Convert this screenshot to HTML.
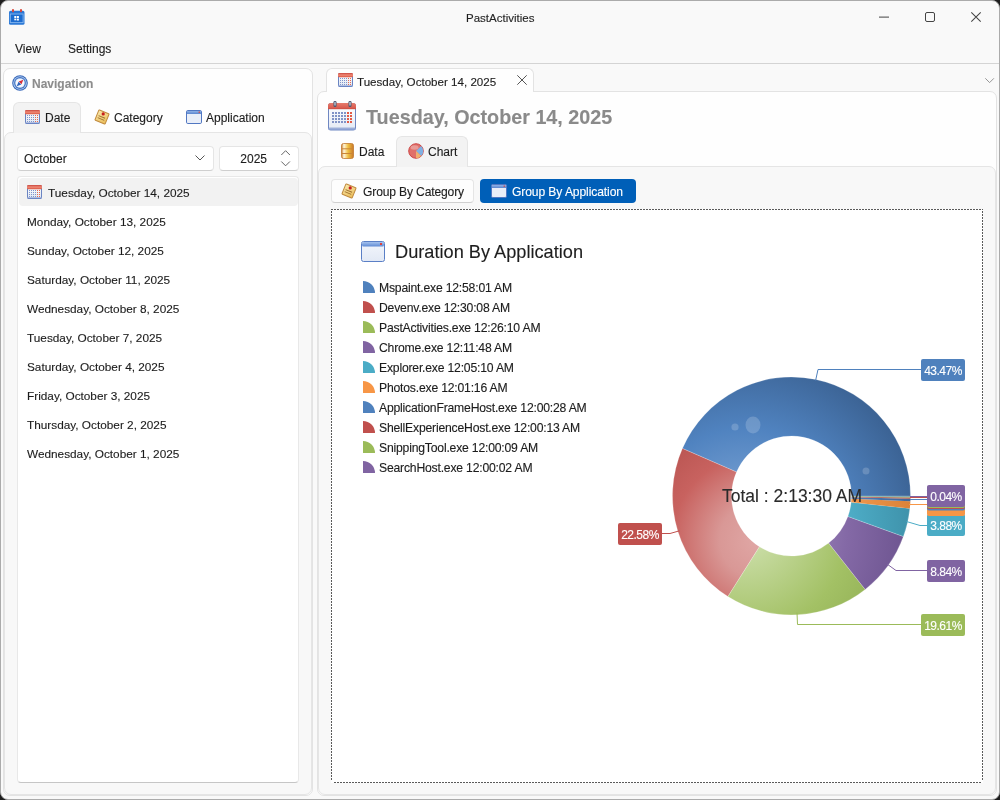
<!DOCTYPE html>
<html><head><meta charset="utf-8">
<style>
*{margin:0;padding:0;box-sizing:border-box}
html,body{width:1000px;height:800px;overflow:hidden;background:#1e1e1e}
body{font-family:"Liberation Sans",sans-serif;color:#1c1c1c;position:relative}
.t{will-change:transform;-webkit-text-stroke:0.12px currentColor}
.a{position:absolute}
.t{position:absolute;white-space:nowrap;line-height:1;font-size:12px}
svg{position:absolute;overflow:visible}
#win{left:0;top:0;width:1000px;height:800px;border-radius:8px;background:#f9f9f9;border:1px solid #ababab;overflow:hidden}
.li{left:27px;font-size:11.8px!important}
</style></head>
<body>
<div id="win" class="a"></div>

<!-- title bar -->
<svg style="left:9px;top:9px" width="16" height="16" viewBox="0 0 16 16">
 <rect x="0" y="1.8" width="15.5" height="14" rx="1.6" fill="#2a78d6"/>
 <rect x="1.3" y="5" width="12.8" height="8.6" fill="#1c6ccf" stroke="#86b6ee" stroke-width="0.9"/>
 <rect x="3" y="0" width="2" height="3.2" rx="0.9" fill="#d8473a"/>
 <rect x="11" y="0" width="2" height="3.2" rx="0.9" fill="#d8473a"/>
 <rect x="5.3" y="7" width="2" height="2" fill="#fff"/><rect x="7.9" y="7" width="2" height="2" fill="#fff"/>
 <rect x="5.3" y="9.6" width="2" height="1.7" fill="#fff"/><rect x="7.9" y="9.6" width="2" height="1.9" fill="#fff"/>
</svg>
<div class="t" style="left:465.6px;top:12.7px;font-size:11.5px;color:#1f1f1f">PastActivities</div>
<svg style="left:879px;top:16px" width="10" height="2"><rect x="0" y="0.6" width="10" height="1" fill="#444"/></svg>
<svg style="left:925px;top:12px" width="10" height="10"><rect x="0.5" y="0.5" width="9" height="9" rx="1.5" fill="none" stroke="#444" stroke-width="1"/></svg>
<svg style="left:971px;top:12px" width="10" height="10"><path d="M0.3,0.3L9.7,9.7M9.7,0.3L0.3,9.7" stroke="#444" stroke-width="1.05"/></svg>

<!-- menu -->
<div class="t" style="left:15px;top:42.8px">View</div>
<div class="t" style="left:68px;top:42.8px">Settings</div>
<div class="a" style="left:1px;top:63px;width:998px;height:1px;background:#d4d4d4"></div>

<!-- NAV PANEL -->
<div class="a" style="left:3px;top:68px;width:310px;height:728px;background:#fefefe;border:1px solid #e3e3e3;border-radius:7px"></div>
<svg style="left:12px;top:75px" width="16" height="16" viewBox="0 0 16 16">
 <circle cx="8" cy="8" r="7.8" fill="#3465b8"/>
 <circle cx="8" cy="8" r="6.8" fill="#b3cdee"/>
 <circle cx="8" cy="8" r="5.9" fill="#4172c4"/>
 <circle cx="8" cy="8" r="4.8" fill="#d7e4f6"/>
 <circle cx="8" cy="8" r="4.1" fill="#f6f9fd"/>
 <path d="M11.3,4.7L9.5,9.3L6.7,6.5Z" fill="#d62c38"/>
 <path d="M4.7,11.3L6.5,6.7L9.3,9.5Z" fill="#2d62bb"/>
</svg>
<div class="t" style="left:32px;top:77.8px;font-weight:bold;color:#8c8c8c">Navigation</div>

<!-- nav tabs -->
<div class="a" style="left:4px;top:132px;width:308px;height:663px;background:#f8f8f8;border:1px solid #e5e5e5;border-radius:7px"></div>
<div class="a" style="left:13px;top:102px;width:68px;height:31px;background:#f3f3f3;border:1px solid #e5e5e5;border-bottom:none;border-radius:6px 6px 0 0"></div>
<svg id="calsm" style="left:25px;top:110px" width="15" height="14" viewBox="0 0 15 14">
 <defs><linearGradient id="calh" x1="0" y1="0" x2="0" y2="1"><stop offset="0" stop-color="#c9463d"/><stop offset="0.5" stop-color="#ef8b78"/><stop offset="1" stop-color="#d9533f"/></linearGradient>
 <linearGradient id="calb" x1="0" y1="0" x2="0" y2="1"><stop offset="0" stop-color="#ffffff"/><stop offset="1" stop-color="#dfe6f2"/></linearGradient></defs>
 <rect x="0.5" y="0.5" width="14" height="13" rx="1.2" fill="url(#calb)" stroke="#6a84c2" stroke-width="1"/>
 <rect x="0" y="0" width="15" height="4.2" rx="1.2" fill="url(#calh)"/>
 <rect x="0.5" y="12.6" width="14" height="1.2" fill="#6b86c6"/>
 <g fill="#7f95cc"><rect x="2" y="5" width="1" height="1"/><rect x="4" y="5" width="1" height="1"/><rect x="6" y="5" width="1" height="1"/><rect x="8" y="5" width="1" height="1"/><rect x="2" y="7" width="1" height="1"/><rect x="4" y="7" width="1" height="1"/><rect x="6" y="7" width="1" height="1"/><rect x="8" y="7" width="1" height="1"/><rect x="2" y="9" width="1" height="1"/><rect x="4" y="9" width="1" height="1"/><rect x="6" y="9" width="1" height="1"/><rect x="8" y="9" width="1" height="1"/><rect x="2" y="11" width="1" height="1"/><rect x="4" y="11" width="1" height="1"/><rect x="6" y="11" width="1" height="1"/><rect x="8" y="11" width="1" height="1"/></g><g fill="#e8694f"><rect x="10" y="5" width="1" height="1"/><rect x="12" y="5" width="1" height="1"/><rect x="10" y="7" width="1" height="1"/><rect x="12" y="7" width="1" height="1"/><rect x="10" y="9" width="1" height="1"/><rect x="12" y="9" width="1" height="1"/><rect x="10" y="11" width="1" height="1"/><rect x="12" y="11" width="1" height="1"/></g>
</svg>
<div class="t" style="left:45px;top:111.8px">Date</div>
<svg id="note1" style="left:94px;top:109px" width="16" height="16" viewBox="0 0 16 16">
 <defs><linearGradient id="ntg" x1="0" y1="0" x2="1" y2="1"><stop offset="0" stop-color="#fbeab0"/><stop offset="1" stop-color="#e9bb55"/></linearGradient></defs>
 <g transform="rotate(22 8 8)"><rect x="2.5" y="2.5" width="11" height="11" rx="0.6" fill="url(#ntg)" stroke="#c08a3e" stroke-width="1"/>
 <rect x="4.3" y="7.6" width="7" height="0.9" fill="#9c6f30"/><rect x="4.3" y="9.8" width="7" height="0.9" fill="#9c6f30"/></g>
 <circle cx="9.2" cy="4.9" r="1.6" fill="#c81e1e"/>
</svg>
<div class="t" style="left:114px;top:111.8px">Category</div>
<svg id="winic1" style="left:186px;top:110px" width="16" height="14" viewBox="0 0 16 14">
 <defs><linearGradient id="wint" x1="0" y1="0" x2="0" y2="1"><stop offset="0" stop-color="#8fb2e6"/><stop offset="1" stop-color="#5b86cf"/></linearGradient></defs>
 <rect x="0.5" y="0.5" width="15" height="13" rx="1.3" fill="#e9eef8" stroke="#5177c2" stroke-width="1"/>
 <rect x="1" y="1" width="14" height="3" fill="url(#wint)"/>
 <rect x="12.6" y="1.6" width="1.4" height="1.2" fill="#e0413a"/>
</svg>
<div class="t" style="left:206px;top:111.8px">Application</div>

<!-- combo -->
<div class="a" style="left:17px;top:146px;width:197px;height:25px;background:#fff;border:1px solid #e5e5e5;border-bottom-color:#cfcfcf;border-radius:4px"></div>
<div class="t" style="left:24px;top:152.8px">October</div>
<svg style="left:195px;top:155px" width="10" height="6"><path d="M0.5,0.5L5,5L9.5,0.5" fill="none" stroke="#555" stroke-width="1"/></svg>
<div class="a" style="left:219px;top:146px;width:80px;height:25px;background:#fff;border:1px solid #e5e5e5;border-bottom-color:#cfcfcf;border-radius:4px"></div>
<div class="t" style="left:238px;top:152.8px;width:29px;text-align:right">2025</div>
<svg style="left:281px;top:150px" width="10" height="17"><path d="M0.3,5L4.6,0.7L8.9,5M0.3,11.5L4.6,15.8L8.9,11.5" fill="none" stroke="#555" stroke-width="0.9"/></svg>

<!-- list -->
<div class="a" style="left:17px;top:176px;width:282px;height:607px;background:#fff;border:1px solid #e8e8e8;border-bottom-color:#c6c6c6;border-radius:4px"></div>
<div class="a" style="left:19px;top:178px;width:279px;height:28px;background:#f2f2f2;border-radius:4px"></div>
<svg style="left:27px;top:185px" width="15" height="14" viewBox="0 0 15 14"><use href="#calsm"/></svg>
<div class="t" style="left:48px;top:187.6px;font-size:11.8px">Tuesday, October 14, 2025</div>
<div class="t li" style="top:216.7px">Monday, October 13, 2025</div>
<div class="t li" style="top:245.7px">Sunday, October 12, 2025</div>
<div class="t li" style="top:274.7px">Saturday, October 11, 2025</div>
<div class="t li" style="top:303.7px">Wednesday, October 8, 2025</div>
<div class="t li" style="top:332.7px">Tuesday, October 7, 2025</div>
<div class="t li" style="top:361.7px">Saturday, October 4, 2025</div>
<div class="t li" style="top:390.7px">Friday, October 3, 2025</div>
<div class="t li" style="top:419.7px">Thursday, October 2, 2025</div>
<div class="t li" style="top:448.7px">Wednesday, October 1, 2025</div>

<!-- RIGHT PANEL -->
<div class="a" style="left:317px;top:91px;width:680px;height:705px;background:#fefefe;border:1px solid #e3e3e3;border-radius:7px"></div>
<div class="a" style="left:326px;top:68px;width:208px;height:24px;background:#fefefe;border:1px solid #e3e3e3;border-bottom:none;border-radius:6px 6px 0 0"></div>
<svg style="left:338px;top:73px" width="15" height="14" viewBox="0 0 15 14"><use href="#calsm"/></svg>
<div class="t" style="left:357.4px;top:75.5px;font-size:11.6px">Tuesday, October 14, 2025</div>
<svg style="left:517px;top:75px" width="10" height="10"><path d="M0.3,0.3L9.7,9.7M9.7,0.3L0.3,9.7" stroke="#555" stroke-width="1"/></svg>
<svg style="left:985px;top:78px" width="10" height="6"><path d="M0.3,0.3L4.6,4.6L8.9,0.3" fill="none" stroke="#8a8a8a" stroke-width="0.9"/></svg>

<svg style="left:328px;top:101px" width="28" height="30" viewBox="0 0 28 30">
 <defs><linearGradient id="bch" x1="0" y1="0" x2="0" y2="1"><stop offset="0" stop-color="#e77b6c"/><stop offset="1" stop-color="#d5564a"/></linearGradient>
 <linearGradient id="bcb" x1="0" y1="0" x2="0" y2="1"><stop offset="0" stop-color="#ffffff"/><stop offset="1" stop-color="#e3e9f4"/></linearGradient></defs>
 <rect x="0.5" y="2.5" width="27" height="26.5" rx="2" fill="url(#bcb)" stroke="#6f87c2" stroke-width="1"/>
 <path d="M0,4.5A2.5,2.5 0 0 1 2.5,2H25.5A2.5,2.5 0 0 1 28,4.5V8H0Z" fill="url(#bch)"/>
 <rect x="0" y="7.5" width="28" height="0.8" fill="#c5473d" opacity="0.6"/>
 <rect x="1" y="26" width="26" height="1.2" fill="#c3cfe6"/>
 <rect x="0.5" y="27.2" width="27" height="1.8" fill="#8aa0d2"/>
 <rect x="5.5" y="0" width="3" height="6" rx="1.3" fill="#4a5870"/><rect x="6.5" y="1" width="1" height="3.5" fill="#e8edf5"/>
 <rect x="20.5" y="0" width="3" height="6" rx="1.3" fill="#4a5870"/><rect x="21.5" y="1" width="1" height="3.5" fill="#e8edf5"/>
 <g fill="#8093c6"><rect x="4" y="11" width="2" height="2"/><rect x="7" y="11" width="2" height="2"/><rect x="10" y="11" width="2" height="2"/><rect x="13" y="11" width="2" height="2"/><rect x="16" y="11" width="2" height="2"/><rect x="4" y="14" width="2" height="2"/><rect x="7" y="14" width="2" height="2"/><rect x="10" y="14" width="2" height="2"/><rect x="13" y="14" width="2" height="2"/><rect x="16" y="14" width="2" height="2"/><rect x="4" y="17" width="2" height="2"/><rect x="7" y="17" width="2" height="2"/><rect x="10" y="17" width="2" height="2"/><rect x="13" y="17" width="2" height="2"/><rect x="16" y="17" width="2" height="2"/><rect x="4" y="20" width="2" height="2"/><rect x="7" y="20" width="2" height="2"/><rect x="10" y="20" width="2" height="2"/><rect x="13" y="20" width="2" height="2"/><rect x="16" y="20" width="2" height="2"/></g><g fill="#e25a45"><rect x="19" y="11" width="2" height="2"/><rect x="22" y="11" width="2" height="2"/><rect x="19" y="14" width="2" height="2"/><rect x="22" y="14" width="2" height="2"/><rect x="19" y="17" width="2" height="2"/><rect x="22" y="17" width="2" height="2"/><rect x="19" y="20" width="2" height="2"/><rect x="22" y="20" width="2" height="2"/></g>
</svg>
<div class="t" style="left:366px;top:108.3px;font-size:19.75px;font-weight:bold;color:#8a8a8a">Tuesday, October 14, 2025</div>

<!-- data/chart tabs -->
<div class="a" style="left:318px;top:166px;width:678px;height:629px;background:#f8f8f8;border:1px solid #e5e5e5;border-radius:7px"></div>
<div class="a" style="left:396px;top:136px;width:72px;height:31px;background:#f3f3f3;border:1px solid #e5e5e5;border-bottom:none;border-radius:6px 6px 0 0"></div>
<svg style="left:341px;top:143px" width="13" height="16" viewBox="0 0 13 16">
 <defs><linearGradient id="dbg" x1="0" y1="0" x2="1" y2="0"><stop offset="0" stop-color="#c57a2a"/><stop offset="0.2" stop-color="#fff6dc"/><stop offset="0.55" stop-color="#f0c040"/><stop offset="1" stop-color="#c8782a"/></linearGradient></defs>
 <rect x="0.5" y="0.5" width="12" height="15" rx="2" fill="url(#dbg)" stroke="#c27a30" stroke-width="0.8"/>
 <rect x="1" y="5.3" width="11" height="1" fill="#c98538"/><rect x="1" y="10" width="11" height="1" fill="#c98538"/>
</svg>
<div class="t" style="left:359.3px;top:145.8px">Data</div>
<svg style="left:408px;top:143px" width="16" height="16" viewBox="0 0 16 16">
 <circle cx="8" cy="8" r="7.3" fill="#e0706a" stroke="#c93c3c" stroke-width="0.9"/>
 <path d="M8,8 L13.2,2.9 A7.3,7.3 0 0 1 13.2,13.1Z" fill="#7fb0e3"/>
 <path d="M8,8 L13.2,13.1 A7.3,7.3 0 0 1 8,15.3Z" fill="#f0b070"/>
 <ellipse cx="6.5" cy="4.5" rx="4" ry="2.2" fill="#fff" opacity="0.3"/>
</svg>
<div class="t" style="left:428.2px;top:145.8px">Chart</div>

<!-- buttons -->
<div class="a" style="left:331px;top:179px;width:143px;height:24px;background:#fdfdfd;border:1px solid #e5e5e5;border-bottom-color:#d0d0d0;border-radius:4px"></div>
<svg style="left:341px;top:183px" width="16" height="16" viewBox="0 0 16 16">
 <defs><linearGradient id="ntg" x1="0" y1="0" x2="1" y2="1"><stop offset="0" stop-color="#fbeab0"/><stop offset="1" stop-color="#e9bb55"/></linearGradient></defs>
 <g transform="rotate(22 8 8)"><rect x="2.5" y="2.5" width="11" height="11" rx="0.6" fill="url(#ntg)" stroke="#c08a3e" stroke-width="1"/>
 <rect x="4.3" y="7.6" width="7" height="0.9" fill="#9c6f30"/><rect x="4.3" y="9.8" width="7" height="0.9" fill="#9c6f30"/></g>
 <circle cx="9.2" cy="4.9" r="1.6" fill="#c81e1e"/>
</svg>
<div class="t" style="left:363px;top:186px;font-size:12.1px;letter-spacing:-0.15px">Group By Category</div>
<div class="a" style="left:480px;top:179px;width:156px;height:24px;background:#005fb8;border-radius:4px"></div>
<svg style="left:491px;top:184px" width="16" height="14" viewBox="0 0 16 14"><use href="#winic1"/></svg>
<div class="t" style="left:512.2px;top:186.2px;font-size:12.1px;letter-spacing:-0.1px;color:#fff">Group By Application</div>

<!-- chart area -->
<div class="a" style="left:331px;top:209px;width:652px;height:574px;background:#fff"></div>
<svg style="left:0;top:0" width="1000" height="800"><g stroke="#5a5a5a" stroke-width="1" stroke-dasharray="2 1" fill="none">
<path d="M331,209.5H983"/><path d="M331.5,211V781"/><path d="M982.5,211V781"/><path d="M334,782.5H981"/></g></svg>
<svg style="left:361px;top:241px" width="24" height="21" viewBox="0 0 24 21">
 <defs><linearGradient id="wint2" x1="0" y1="0" x2="0" y2="1"><stop offset="0" stop-color="#a4c2ee"/><stop offset="1" stop-color="#5f8ad3"/></linearGradient>
 <linearGradient id="winb2" x1="0" y1="0" x2="0" y2="1"><stop offset="0" stop-color="#f3f6fc"/><stop offset="1" stop-color="#e2e9f5"/></linearGradient></defs>
 <rect x="0.5" y="0.5" width="23" height="20" rx="2" fill="url(#winb2)" stroke="#5a7fc6" stroke-width="1"/>
 <rect x="1" y="1" width="22" height="4.5" rx="1.5" fill="url(#wint2)"/>
 <rect x="19" y="2" width="2" height="2" fill="#e0413a"/>
</svg>
<div class="t" style="left:395px;top:242.6px;font-size:18.2px;color:#1e1e1e">Duration By Application</div>
<svg style="left:363px;top:281px" width="12" height="12"><path d="M0,12V0A12,12 0 0 1 12,12Z" fill="#4f81bd"/></svg>
<div class="t" style="left:379px;top:281.78px;font-size:12.2px;letter-spacing:-0.2px;color:#1c1c1c">Mspaint.exe 12:58:01 AM</div>
<svg style="left:363px;top:301px" width="12" height="12"><path d="M0,12V0A12,12 0 0 1 12,12Z" fill="#c0504d"/></svg>
<div class="t" style="left:379px;top:301.78px;font-size:12.2px;letter-spacing:-0.2px;color:#1c1c1c">Devenv.exe 12:30:08 AM</div>
<svg style="left:363px;top:321px" width="12" height="12"><path d="M0,12V0A12,12 0 0 1 12,12Z" fill="#9bbb59"/></svg>
<div class="t" style="left:379px;top:321.78px;font-size:12.2px;letter-spacing:-0.2px;color:#1c1c1c">PastActivities.exe 12:26:10 AM</div>
<svg style="left:363px;top:341px" width="12" height="12"><path d="M0,12V0A12,12 0 0 1 12,12Z" fill="#8064a2"/></svg>
<div class="t" style="left:379px;top:341.78px;font-size:12.2px;letter-spacing:-0.2px;color:#1c1c1c">Chrome.exe 12:11:48 AM</div>
<svg style="left:363px;top:361px" width="12" height="12"><path d="M0,12V0A12,12 0 0 1 12,12Z" fill="#4bacc6"/></svg>
<div class="t" style="left:379px;top:361.78px;font-size:12.2px;letter-spacing:-0.2px;color:#1c1c1c">Explorer.exe 12:05:10 AM</div>
<svg style="left:363px;top:381px" width="12" height="12"><path d="M0,12V0A12,12 0 0 1 12,12Z" fill="#f79646"/></svg>
<div class="t" style="left:379px;top:381.78px;font-size:12.2px;letter-spacing:-0.2px;color:#1c1c1c">Photos.exe 12:01:16 AM</div>
<svg style="left:363px;top:401px" width="12" height="12"><path d="M0,12V0A12,12 0 0 1 12,12Z" fill="#4f81bd"/></svg>
<div class="t" style="left:379px;top:401.78px;font-size:12.2px;letter-spacing:-0.2px;color:#1c1c1c">ApplicationFrameHost.exe 12:00:28 AM</div>
<svg style="left:363px;top:421px" width="12" height="12"><path d="M0,12V0A12,12 0 0 1 12,12Z" fill="#c0504d"/></svg>
<div class="t" style="left:379px;top:421.78px;font-size:12.2px;letter-spacing:-0.2px;color:#1c1c1c">ShellExperienceHost.exe 12:00:13 AM</div>
<svg style="left:363px;top:441px" width="12" height="12"><path d="M0,12V0A12,12 0 0 1 12,12Z" fill="#9bbb59"/></svg>
<div class="t" style="left:379px;top:441.78px;font-size:12.2px;letter-spacing:-0.2px;color:#1c1c1c">SnippingTool.exe 12:00:09 AM</div>
<svg style="left:363px;top:461px" width="12" height="12"><path d="M0,12V0A12,12 0 0 1 12,12Z" fill="#8064a2"/></svg>
<div class="t" style="left:379px;top:461.78px;font-size:12.2px;letter-spacing:-0.2px;color:#1c1c1c">SearchHost.exe 12:00:02 AM</div>
<svg style="left:0;top:0" width="1000" height="800">
<defs>
<radialGradient id="gblue" gradientUnits="userSpaceOnUse" cx="745" cy="530" r="185"><stop offset="0" stop-color="#8aaedb"/><stop offset="0.55" stop-color="#5083c0"/><stop offset="1" stop-color="#395f8f"/></radialGradient>
<radialGradient id="gred" gradientUnits="userSpaceOnUse" cx="757" cy="540" r="170"><stop offset="0" stop-color="#e0a7a5"/><stop offset="0.22" stop-color="#d99896"/><stop offset="0.5" stop-color="#c8625f"/><stop offset="1" stop-color="#a84542"/></radialGradient>
<radialGradient id="ggreen" gradientUnits="userSpaceOnUse" cx="745" cy="530" r="185"><stop offset="0" stop-color="#d2e3b4"/><stop offset="0.55" stop-color="#a3c165"/><stop offset="1" stop-color="#88a64c"/></radialGradient>
<radialGradient id="gpurple" gradientUnits="userSpaceOnUse" cx="745" cy="530" r="185"><stop offset="0" stop-color="#b3a2cc"/><stop offset="0.55" stop-color="#8469a6"/><stop offset="1" stop-color="#654d88"/></radialGradient>
<radialGradient id="gaqua" gradientUnits="userSpaceOnUse" cx="745" cy="530" r="185"><stop offset="0" stop-color="#8fd0e0"/><stop offset="0.55" stop-color="#4eaec8"/><stop offset="1" stop-color="#3a8aa2"/></radialGradient>
<radialGradient id="gorange" gradientUnits="userSpaceOnUse" cx="745" cy="530" r="185"><stop offset="0" stop-color="#fbc08f"/><stop offset="0.55" stop-color="#f39a4e"/><stop offset="1" stop-color="#d47c33"/></radialGradient>
</defs>
<g stroke="#ffffff" stroke-opacity="0.35" stroke-width="0.6">
<path d="M910.50,496.00A119,119 0 0 0 682.41,448.45L736.50,472.03A60,60 0 0 1 851.50,496.00Z" fill="url(#gblue)"/>
<path d="M682.41,448.45A119,119 0 0 0 727.93,596.59L759.45,546.72A60,60 0 0 1 736.50,472.03Z" fill="url(#gred)"/>
<path d="M727.93,596.59A119,119 0 0 0 865.20,589.43L828.66,543.11A60,60 0 0 1 759.45,546.72Z" fill="url(#ggreen)"/>
<path d="M865.20,589.43A119,119 0 0 0 903.39,536.52L847.91,516.43A60,60 0 0 1 828.66,543.11Z" fill="url(#gpurple)"/>
<path d="M903.39,536.52A119,119 0 0 0 909.85,508.39L851.17,502.25A60,60 0 0 1 847.91,516.43Z" fill="url(#gaqua)"/>
</g>
<g>
<path d="M909.85,508.39A119,119 0 0 0 910.38,501.32L851.44,498.68A60,60 0 0 1 851.17,502.25Z" fill="url(#gorange)"/>
<path d="M910.38,501.32A119,119 0 0 0 910.47,498.71L851.48,497.36A60,60 0 0 1 851.44,498.68Z" fill="url(#gblue)"/>
<path d="M910.47,498.71A119,119 0 0 0 910.49,497.49L851.50,496.75A60,60 0 0 1 851.48,497.36Z" fill="url(#gred)"/>
<path d="M910.49,497.49A119,119 0 0 0 910.50,496.65L851.50,496.33A60,60 0 0 1 851.50,496.75Z" fill="url(#ggreen)"/>
<path d="M910.50,496.65A119,119 0 0 0 910.50,496.47L851.50,496.24A60,60 0 0 1 851.50,496.33Z" fill="url(#gpurple)"/>
<path d="M910.50,496.47A119,119 0 0 0 910.50,496.00L851.50,496.00A60,60 0 0 1 851.50,496.24Z" fill="url(#gaqua)"/>
</g>
<g fill="#ffffff" fill-opacity="0.18">
<circle cx="735" cy="427" r="3.6"/><ellipse cx="753" cy="425" rx="7.5" ry="8.5"/><circle cx="866" cy="471" r="3.5"/>
</g>
<!-- connectors -->
<g fill="none" stroke-width="1">
<path d="M815.6,380.5L818,369.5H921" stroke="#4f81bd"/>
<path d="M679.5,530.8L670,533.5H662" stroke="#c0504d"/>
<path d="M797,612.5L797.5,624.5H921" stroke="#9bbb59"/>
<path d="M887,564L896,570.5H927" stroke="#8064a2"/>
<path d="M906.5,521.5L920,525.5H927" stroke="#4bacc6"/>
<path d="M909,504.5H927" stroke="#f79646"/>
<path d="M910,499.5H927" stroke="#4f81bd"/>
<path d="M910,497.5H927" stroke="#c0504d"/>
<path d="M910,496.5H927" stroke="#8064a2"/>
</g>
<g>
<rect x="921" y="359" width="44" height="22" rx="2" fill="#4f81bd"/>
<rect x="618" y="523" width="44" height="22" rx="2" fill="#c0504d"/>
<rect x="921" y="614" width="44" height="22" rx="2" fill="#9bbb59"/>
<rect x="927" y="560" width="38" height="22" rx="2" fill="#8064a2"/>
<rect x="927" y="514" width="38" height="22" rx="2" fill="#4bacc6"/>
<rect x="927" y="494" width="38" height="22" rx="2" fill="#f79646"/>
<rect x="927" y="488.5" width="38" height="22" rx="2" fill="#4f81bd"/>
<rect x="927" y="487" width="38" height="22" rx="2" fill="#c0504d"/>
<rect x="927" y="486" width="38" height="22" rx="2" fill="#9bbb59"/>
<rect x="927" y="485" width="38" height="22" rx="2" fill="#8064a2"/>
</g>
</svg>
<div class="t" style="left:722px;top:487.6px;font-size:17.5px;color:#2a2a2a">Total : 2:13:30 AM</div>
<div class="t" style="left:921px;top:365.29px;width:44px;text-align:center;font-size:12px;letter-spacing:-0.5px;color:#fff">43.47%</div>
<div class="t" style="left:618px;top:529.29px;width:44px;text-align:center;font-size:12px;letter-spacing:-0.5px;color:#fff">22.58%</div>
<div class="t" style="left:921px;top:620.29px;width:44px;text-align:center;font-size:12px;letter-spacing:-0.5px;color:#fff">19.61%</div>
<div class="t" style="left:927px;top:566.29px;width:38px;text-align:center;font-size:12px;letter-spacing:-0.5px;color:#fff">8.84%</div>
<div class="t" style="left:927px;top:520.29px;width:38px;text-align:center;font-size:12px;letter-spacing:-0.5px;color:#fff">3.88%</div>
<div class="t" style="left:927px;top:491.29px;width:38px;text-align:center;font-size:12px;letter-spacing:-0.5px;color:#fff">0.04%</div>
</body></html>
